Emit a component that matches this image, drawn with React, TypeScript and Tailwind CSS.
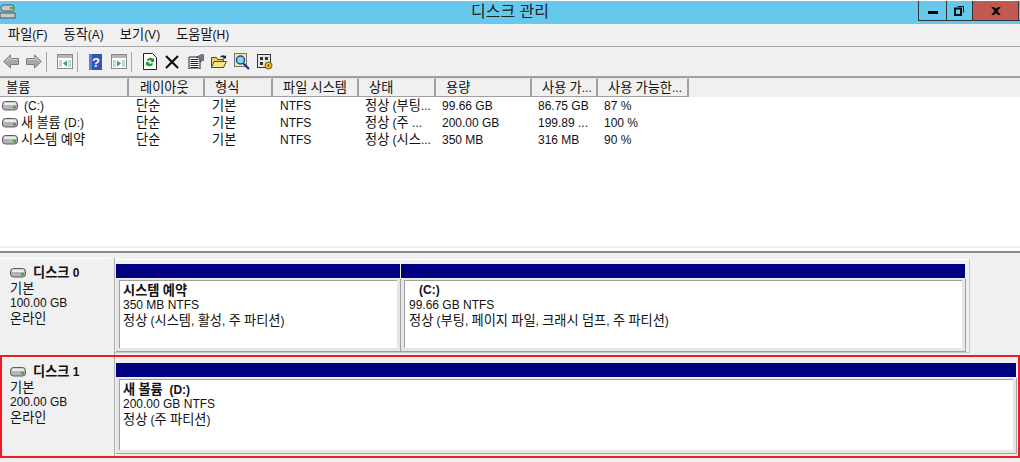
import React from 'react';

const FONT = 'font-["Liberation_Sans","Noto_Sans_CJK_KR",sans-serif]';

// Korean runs are a touch bigger than the Latin ones in the original UI font
function K({ children }: { children: string }) {
  return (
    <span className="whitespace-pre">
      {children.split(/([가-힣]+)/).map((part, i) =>
        i % 2 === 1 ? <span key={i} className="text-[13.2px]">{part}</span> : part,
      )}
    </span>
  );
}

function DriveIcon({ className = '' }: { className?: string }) {
  return (
    <svg width="16" height="10" viewBox="0 0 16 10" className={className}>
      <rect x="0.5" y="0.5" width="15" height="8.500" rx="3" fill="#b4b4b4" stroke="#5c5c5c" />
      <rect x="2" y="1.500" width="12" height="2.500" rx="1" fill="#ececec" />
      <rect x="11" y="5" width="3" height="2.500" fill="#3fae2a" />
    </svg>
  );
}

function Arrow({ flip }: { flip?: boolean }) {
  return (
    <svg width="16" height="15" viewBox="0 0 16 15" className={flip ? '-scale-x-100' : ''}>
      <path d="M.7 7.500 7.500 1v3.500h8v6h-8V14z" fill="#a6a6a6" stroke="#7d7d7d" />
      <path d="M2.500 7.500 7 3.500v2h7.500" fill="none" stroke="#cfcfcf" />
    </svg>
  );
}

function PaneIcon({ right }: { right?: boolean }) {
  return (
    <svg width="16" height="15" viewBox="0 0 16 15">
      <rect x="0.5" y="0.5" width="15" height="14" fill="#fff" stroke="#8a8a8a" />
      <rect x="1" y="1" width="14" height="3" fill="#b5b5b5" />
      <rect x="2" y="6" width="3" height="7" fill="#c4d3e6" />
      <rect x="11" y="6" width="3" height="7" fill="#c4d3e6" />
      {right ? <path d="M6 6.500 10 9.500 6 12.500z" fill="#2f9e44" /> : <path d="M10 6.500 6 9.500 10 12.500z" fill="#2f9e44" />}
    </svg>
  );
}

function Toolbar() {
  return (
    <div className="flex h-[31px] shrink-0 items-center border-b-2 border-[#a0a0a0] bg-[#f0f0f0]">
      <div className="flex w-[46px] items-center gap-[7px] pl-[3px]">
        <Arrow />
        <Arrow flip />
      </div>
      <div className="h-[20px] w-px bg-[#a8a8a8]" />
      <div className="flex w-[30px] pl-[10px]"><PaneIcon /></div>
      <div className="h-[20px] w-px bg-[#a8a8a8]" />
      <div className="flex w-[53px] items-center gap-[9px] pl-[11px]">
        <svg width="13" height="16" viewBox="0 0 13 16">
          <rect width="13" height="16" fill="#2f55b5" />
          <path d="M0 0h3v16H0z" fill="#5f7fd6" />
          <text x="7" y="13" fontSize="13" fontWeight="700" textAnchor="middle" fill="#fff" fontFamily="Liberation Sans">?</text>
        </svg>
        <PaneIcon right />
      </div>
      <div className="h-[20px] w-px bg-[#a8a8a8]" />
      <div className="flex items-center gap-[7px] pl-[11px]">
        <svg width="14" height="17" viewBox="0 0 14 17">
          <path d="M.5.500h9l4 4v12H.5z" fill="#fff" stroke="#222" />
          <path d="M4 7a3.500 3.500 0 0 1 6-1l1-1v4H7.500l1-1A2 2 0 0 0 5 8.500zM10 11a3.500 3.500 0 0 1-6 1l-1 1V9h3.500l-1 1A2 2 0 0 0 9 9.500z" fill="#1f9a2e" />
        </svg>
        <svg width="14" height="14" viewBox="0 0 14 14" className="ml-[1px]">
          <path d="M1 1 13 13M13 1 1 13" stroke="#111" strokeWidth="2.200" />
        </svg>
        <svg width="16" height="15" viewBox="0 0 16 15" className="ml-[2px]">
          <path d="M1 3h11v12H1z" fill="#fff" stroke="#222" />
          <path d="M2.500 5.500h8M2.500 7.500h8M2.500 9.500h8M2.500 11.500h8M2.500 13.500h8" stroke="#222" />
          <path d="M8 3.500 14 0l2 1v5l-4 2V4z" fill="#6d7f93" stroke="#333" strokeWidth=".5" />
        </svg>
        <svg width="16" height="15" viewBox="0 0 16 15">
          <path d="M.5 3.500h5l1 2h6v8H.500z" fill="#e6d26c" stroke="#55500f" />
          <path d="M3 7.500h12.500l-3 6H.500z" fill="#f4e58c" stroke="#55500f" />
          <path d="M9 3q2-3 5-1l1-1v3.500h-3.500l1-1q-2-1-3.500 0z" fill="#222" />
        </svg>
        <svg width="16" height="17" viewBox="0 0 16 17">
          <rect x="0.500" y="0.500" width="12" height="13" fill="#f2e6a6" stroke="#777" />
          <circle cx="6.500" cy="7" r="4" fill="#7fe0e8" stroke="#2b3f9e" strokeWidth="1.400" />
          <path d="M9.500 10.500 15 16" stroke="#1c2f9e" strokeWidth="2.200" />
        </svg>
        <svg width="16" height="16" viewBox="0 0 16 16">
          <rect x="0.500" y="0.500" width="13" height="13" fill="#e4e4e4" stroke="#333" />
          <path d="M3 3h3v3H3zM8 3h3v3H8zM3 8h3v3H3z" fill="#333" />
          <circle cx="11.500" cy="11.500" r="3.500" fill="#e8c21e" stroke="#6b5a00" />
          <circle cx="11.500" cy="11.500" r="1" fill="#333" />
        </svg>
      </div>
    </div>
  );
}

const columns = [
  { label: '볼륨', w: 'w-[129px]', pad: 'pl-[6px]' },
  { label: '레이아웃', w: 'w-[76px]', pad: 'pl-[11px]' },
  { label: '형식', w: 'w-[68px]', pad: 'pl-[10px]' },
  { label: '파일 시스템', w: 'w-[86px]', pad: 'pl-[10px]' },
  { label: '상태', w: 'w-[77px]', pad: 'pl-[10px]' },
  { label: '용량', w: 'w-[96px]', pad: 'pl-[10px]' },
  { label: '사용 가...', w: 'w-[66px]', pad: 'pl-[10px]' },
  { label: '사용 가능한...', w: 'w-[91px]', pad: 'pl-[10px]' },
];

const rows = [
  ['(C:)', '단순', '기본', 'NTFS', '정상 (부팅...', '99.66 GB', '86.75 GB', '87 %'],
  ['새 볼륨 (D:)', '단순', '기본', 'NTFS', '정상 (주 ...', '200.00 GB', '199.89 ...', '100 %'],
  ['시스템 예약', '단순', '기본', 'NTFS', '정상 (시스...', '350 MB', '316 MB', '90 %'],
];

const cellW = ['w-[136px]', 'w-[76px]', 'w-[68px]', 'w-[85px]', 'w-[77px]', 'w-[96px]', 'w-[66px]', 'w-[60px]'];

function VolumeList() {
  return (
    <div className="h-[168px] shrink-0 bg-white">
      <div className="flex h-[19px] bg-[#f0f0f0]">
        {columns.map((c) => (
          <div key={c.label} className={`${c.w} ${c.pad} flex items-center whitespace-nowrap border-y border-r-2 border-[#a0a0a0] border-t-[#e4e4e4]`}>
            <K>{c.label}</K>
          </div>
        ))}
      </div>
      {rows.map((r, i) => (
        <div key={i} className="flex h-[17px] items-center whitespace-nowrap">
          {r.map((t, j) => (
            <div key={j} className={`${cellW[j]} flex items-center`}>
              {j === 0 && <DriveIcon className={i === 0 ? 'ml-[2px] mr-[6px]' : 'ml-[2px] mr-[3px]'} />}
              <K>{t}</K>
            </div>
          ))}
        </div>
      ))}
    </div>
  );
}

function DiskLabel({ name, size, className }: { name: string; size: string; className: string }) {
  return (
    <div className={`${className} flex shrink-0 flex-col border-t border-white bg-[#f0f0f0] pt-[6px] leading-[15px]`}>
      <div className="flex h-[15px] items-center font-bold">
        <DriveIcon className="mr-[7px]" />
        <K>{name}</K>
      </div>
      <div className="mt-[1px] h-[15px]"><K>기본</K></div>
      <div className="h-[15px]">{size}</div>
      <div className="h-[15px]"><K>온라인</K></div>
    </div>
  );
}

function Partition({ w, bold, lines, pad = 'pl-[3px]' }: { w: string; bold: string; lines: string[]; pad?: string }) {
  return (
    <div className={`${w} flex h-full flex-col`}>
      <div className="mr-[1px] h-[14px] shrink-0 bg-[#000080]" />
      <div className="mt-[1px] flex-1 border-b border-r border-[#a0a0a0] bg-[#e6e6e6] pb-[3px] pl-[3px] pr-[3px] pt-[1px]">
        <div className={`${pad} h-full border-l border-t border-[#a0a0a0] bg-white pt-[2px] leading-[15px]`}>
          <div className="h-[15px] font-bold"><K>{bold}</K></div>
          {lines.map((l) => <div key={l} className="h-[15px]"><K>{l}</K></div>)}
        </div>
      </div>
    </div>
  );
}

export default function App() {
  return (
    <div className={`${FONT} flex h-[462px] w-[1020px] flex-col overflow-hidden bg-[#f0f0f0] text-[12px] text-[#111]`}>
      {/* title bar */}
      <div className="flex h-[24px] shrink-0 items-start border-t border-white bg-[#65c8ec]">
        <svg width="16" height="16" viewBox="0 0 16 16" className="mt-[3px]">
          <rect x="1" y="1" width="13" height="6" rx="2" fill="#c9c9c9" stroke="#555" />
          <rect x="10" y="3" width="3" height="2" fill="#3fae2a" />
          <rect x="0" y="9" width="15" height="5" fill="#c9c9c9" stroke="#555" />
        </svg>
        <div className="flex-1 pl-[86px] pt-[1px] text-center text-[16px] leading-[20px] text-[#222]">디스크 관리</div>
        <div className="flex h-[20px] border-b border-[#333]">
          <div className="flex w-[29px] items-center justify-center border-x border-[#333]">
            <div className="mt-[3px] h-[3px] w-[10px] bg-black" />
          </div>
          <div className="flex w-[26px] items-center justify-center border-r border-[#333]">
            <svg width="11" height="11" viewBox="0 0 11 11">
              <path d="M3.500 1.500h6v6" fill="none" stroke="#111" />
              <rect x="1" y="3.500" width="6" height="6.500" fill="none" stroke="#111" strokeWidth="2" />
            </svg>
          </div>
          <div className="flex w-[46px] items-center justify-center border-r border-[#5a3530] bg-[#c0594f]">
            <svg width="10" height="8" viewBox="0 0 10 8">
              <path d="M1 0 5 3 9 0M1 8 5 5 9 8M3 2l4 4M7 2 3 6" stroke="#000" strokeWidth="2" fill="none" />
            </svg>
          </div>
          <div className="w-px" />
        </div>
      </div>

      {/* menu bar */}
      <div className="flex h-[23px] shrink-0 items-center gap-[16px] border-b border-[#a8a8a8] pl-[8px]">
        <K>파일(F)</K>
        <K>동작(A)</K>
        <K>보기(V)</K>
        <K>도움말(H)</K>
      </div>

      <Toolbar />
      <VolumeList />

      {/* splitter */}
      <div className="h-[5px] shrink-0 border-b-[3px] border-white bg-[#f0f0f0]" />
      <div className="h-[2px] shrink-0 bg-[#8c8c8c]" />
      {/* disks */}
      <div className="flex flex-col">
        <div className="flex h-[102px] pt-[5px]">
          <DiskLabel name="디스크 0" size="100.00 GB" className="w-[111px] pl-[10px]" />
          <div className="ml-[3px] w-px bg-[#b0b0b0]" />
          <div className="mt-[1px] flex h-[94px] w-[855px] border-b border-r border-t border-[#c8c8c8] border-t-white pl-[1px] pr-[3px] pt-[4px]">
            <Partition w="w-[285px]" bold="시스템 예약" lines={['350 MB NTFS', '정상 (시스템, 활성, 주 파티션)']} />
            <Partition w="w-[565px]" pad="pl-[4px]" bold="   (C:)" lines={['99.66 GB NTFS', '정상 (부팅, 페이지 파일, 크래시 덤프, 주 파티션)']} />
          </div>
        </div>
        <div className="flex h-[103px] border-2 border-[#ed1c24]">
          <DiskLabel name="디스크 1" size="200.00 GB" className="mb-[1px] w-[109px] pl-[8px]" />
          <div className="ml-[3px] w-px bg-[#b0b0b0]" />
          <div className="flex flex-1 pb-[2px] pl-[1px] pr-px pt-[6px]">
            <Partition w="w-full" bold="새 볼륨  (D:)" lines={['200.00 GB NTFS', '정상 (주 파티션)']} />
          </div>
        </div>
      </div>
    </div>
  );
}
